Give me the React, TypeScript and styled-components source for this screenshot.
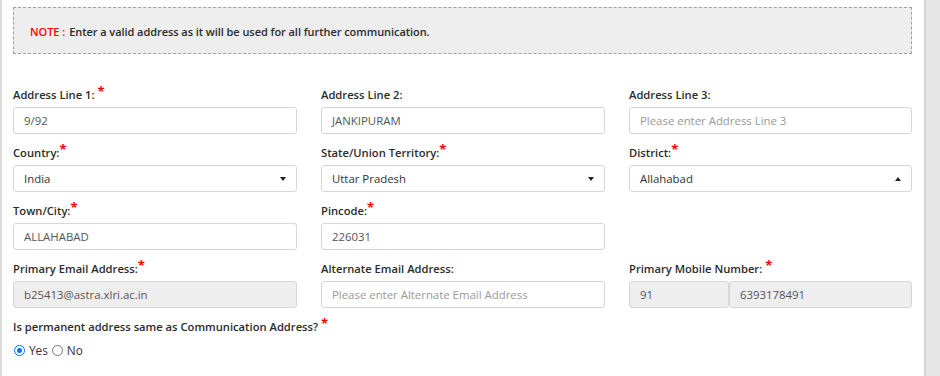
import React from "react";
import styled, { createGlobalStyle } from "styled-components";

const Global = createGlobalStyle`
  html, body { margin: 0; padding: 0; background: #fff; }
  body { font-family: "Open Sans", "Noto Sans", sans-serif; }
  * { box-sizing: border-box; }
`;

const Page = styled.div`
  display: flex;
  width: 940px;
  height: 376px;
  overflow: hidden;
`;

const LeftEdge = styled.div`
  width: 2px;
  flex: 0 0 2px;
  background: #dcdcdc;
`;

const Panel = styled.div`
  flex: 0 0 922px;
  background: #fff;
  padding: 7px 12px 0 11px;
`;

const Side = styled.div`
  flex: 1;
  background: #e6e6e6;
  border-left: 2px solid #d2d2d2;
`;

const Note = styled.div`
  height: 47px;
  background: #eeeeee;
  border: 1px dashed #a0a0a0;
  display: flex;
  align-items: center;
  padding-left: 16px;
  padding-top: 2px;
  font-size: 11px;
  font-weight: 600;
  letter-spacing: -0.06px;
  color: #2b2b2b;
  margin-bottom: 32px;
`;

const NoteTag = styled.span`
  color: #ff0000;
  margin-right: 4px;
`;

const Grid = styled.div`
  display: grid;
  grid-template-columns: 284px 284px 283px;
  column-gap: 24px;
`;

const Field = styled.div`
  display: flex;
  flex-direction: column;
  margin-bottom: 10px;
`;

const Label = styled.label`
  display: block;
  height: 18px;
  font-size: 11.2px;
  line-height: 18px;
  font-weight: 600;
  color: #2b2b2b;
  margin-bottom: 3px;
  white-space: nowrap;
`;

const Req = styled.span<{ $space?: boolean }>`
  color: #ff0000;
  font-weight: 700;
  font-size: 13px;
  line-height: 0;
  position: relative;
  top: -3px;
  margin-left: ${(p) => (p.$space ? "3px" : "0")};
`;

const Box = styled.div<{ $disabled?: boolean; $placeholder?: boolean }>`
  height: 27px;
  border: 1px solid #d6d6d6;
  border-radius: 3px;
  background: ${(p) => (p.$disabled ? "#eeeeee" : "#fff")};
  display: flex;
  align-items: center;
  padding: 0 10px;
  font-size: 11.4px;
  color: ${(p) => (p.$placeholder ? "#999" : "#555")};
`;

const SelectBox = styled(Box)`
  justify-content: space-between;
  color: #333;
  padding-right: 10px;
`;

const Caret = styled.span<{ $up?: boolean }>`
  width: 0;
  height: 0;
  border-left: 3.5px solid transparent;
  border-right: 3.5px solid transparent;
  ${(p) =>
    p.$up ? "border-bottom: 4px solid #222;" : "border-top: 4px solid #222;"}
`;

const PhoneRow = styled.div`
  display: grid;
  grid-template-columns: 100px 1fr;
`;

const Question = styled.div`
  display: flex;
  flex-direction: column;
`;

const Radios = styled.div`
  display: flex;
  align-items: center;
  height: 18px;
  margin-top: 2px;
  font-size: 11.8px;
  color: #333;
  padding-left: 1px;
`;

const Radio = styled.span<{ $on?: boolean }>`
  width: 11px;
  height: 11px;
  border-radius: 50%;
  border: 1px solid ${(p) => (p.$on ? "#0075ff" : "#767676")};
  background: #fff;
  display: inline-flex;
  align-items: center;
  justify-content: center;
  margin-right: 4px;
  &::after {
    content: "";
    width: 5px;
    height: 5px;
    border-radius: 50%;
    background: ${(p) => (p.$on ? "#0075ff" : "transparent")};
  }
`;

const RadioText = styled.span`
  margin-right: 4px;
`;

export default function App() {
  return (
    <Page>
      <Global />
      <LeftEdge />
      <Panel>
        <Note>
          <NoteTag>NOTE :</NoteTag>
          Enter a valid address as it will be used for all further communication.
        </Note>
        <Grid>
          <Field>
            <Label>
              Address Line 1:<Req $space>*</Req>
            </Label>
            <Box>9/92</Box>
          </Field>
          <Field>
            <Label>Address Line 2:</Label>
            <Box>JANKIPURAM</Box>
          </Field>
          <Field>
            <Label>Address Line 3:</Label>
            <Box $placeholder>Please enter Address Line 3</Box>
          </Field>

          <Field>
            <Label>
              Country:<Req>*</Req>
            </Label>
            <SelectBox>
              India
              <Caret />
            </SelectBox>
          </Field>
          <Field>
            <Label>
              State/Union Territory:<Req>*</Req>
            </Label>
            <SelectBox>
              Uttar Pradesh
              <Caret />
            </SelectBox>
          </Field>
          <Field>
            <Label>
              District:<Req>*</Req>
            </Label>
            <SelectBox>
              Allahabad
              <Caret $up />
            </SelectBox>
          </Field>

          <Field>
            <Label>
              Town/City:<Req>*</Req>
            </Label>
            <Box>ALLAHABAD</Box>
          </Field>
          <Field>
            <Label>
              Pincode:<Req>*</Req>
            </Label>
            <Box>226031</Box>
          </Field>
          <div />

          <Field>
            <Label>
              Primary Email Address:<Req>*</Req>
            </Label>
            <Box $disabled>b25413@astra.xlri.ac.in</Box>
          </Field>
          <Field>
            <Label>Alternate Email Address:</Label>
            <Box $placeholder>Please enter Alternate Email Address</Box>
          </Field>
          <Field>
            <Label>
              Primary Mobile Number:<Req $space>*</Req>
            </Label>
            <PhoneRow>
              <Box $disabled>91</Box>
              <Box $disabled>6393178491</Box>
            </PhoneRow>
          </Field>
        </Grid>
        <Question>
          <Label>
            Is permanent address same as Communication Address?<Req $space>*</Req>
          </Label>
          <Radios>
            <Radio $on />
            <RadioText>Yes</RadioText>
            <Radio />
            <RadioText>No</RadioText>
          </Radios>
        </Question>
      </Panel>
      <Side />
    </Page>
  );
}
